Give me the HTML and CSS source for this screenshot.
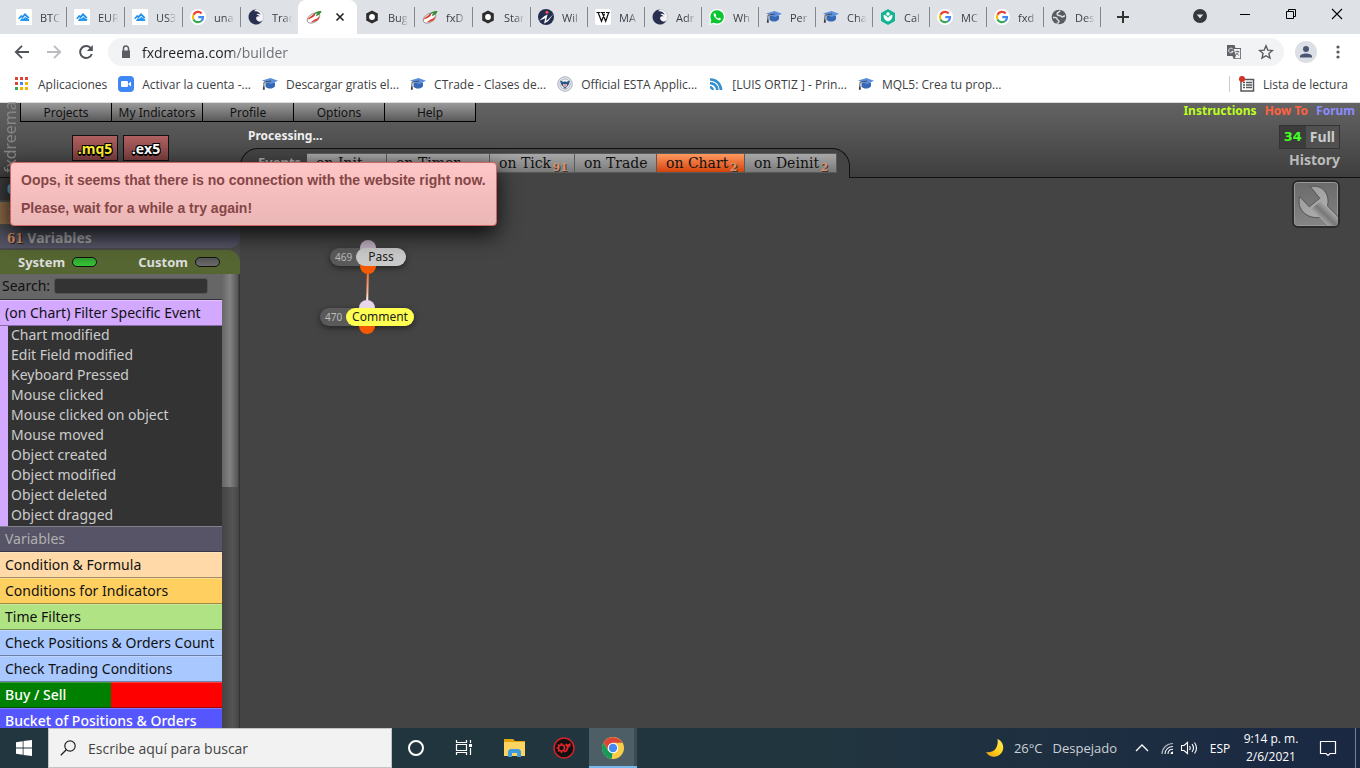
FILE: index.html
```html
<!DOCTYPE html>
<html lang="es">
<head>
<meta charset="utf-8">
<title>fxDreema builder</title>
<link rel="stylesheet" href="styles.css">
</head>
<body>
<svg class="defs" aria-hidden="true">
  <symbol id="cloud" viewBox="0 0 16 16"><rect width="16" height="16" rx="1" fill="#fff"/><path d="M2 9.500L5 6l1.500.8L9 4l4.500 4.500-1.500 1-3-2.700-2.200 2.400-1.700-.9L3.600 10z" fill="#1e8fee"/><path d="M4 11.500L5.800 9l1.500.8L9.200 8l4.300 2.500-.7 1.500H4.500z" fill="#2196f3"/></symbol>
  <symbol id="google" viewBox="0 0 16 16"><circle cx="8" cy="8" r="8" fill="#fff"/><path d="M11.700 4.400A5.100 5.100 0 0 0 3.500 5.700" fill="none" stroke="#ea4335" stroke-width="2.200"/><path d="M3.500 5.700a5.100 5.100 0 0 0 0 4.700" fill="none" stroke="#fbbc05" stroke-width="2.200"/><path d="M3.500 10.400a5.100 5.100 0 0 0 7.800 1.600" fill="none" stroke="#34a853" stroke-width="2.200"/><path d="M11.300 12A5 5 0 0 0 13 8.200H8.300" fill="none" stroke="#4285f4" stroke-width="2.200"/></symbol>
  <symbol id="eagle" viewBox="0 0 16 16"><circle cx="8" cy="8" r="7.500" fill="#f4f4f7" stroke="#b9bcc8" stroke-width=".6"/><path d="M8 .6c-1 .6-1.400 1-1.600 1.700 2.500-.6 5.500.7 6.300 3.700-1.300-1.200-3-1.500-4.200-.8 1 .7 2.600.9 3 2.500-1-.6-2-.6-2.800.1C7.600 9 8 11.500 11 12.600c1.500.3 2.500-.3 3.400-1.400-1 2.500-3.200 4.200-6.400 4.200C3.800 15.400.6 12 .6 8S4 .6 8 .6z" fill="#292f50"/></symbol>
  <symbol id="fx" viewBox="0 0 16 16"><ellipse cx="7.500" cy="9" rx="7" ry="4.200" transform="rotate(-32 7.500 9)" fill="#fff" stroke="#777" stroke-width=".7"/><path d="M1.500 10.500C3 8 6 7 8.500 4c1.500 1.500.3 3.200-2.100 4.500C4.500 9.700 3 10.300 1.500 10.500zM4.500 13.200c2-.7 3-2.700 6-3.400 1.400-.3 1.500-1.500 1.800-2.500 1.600 2.200-.2 4.200-3 5-1.700.6-3 1.100-4.800.9z" fill="#e53a2c"/><path d="M7.500 6C9 3 12 1.500 15.500 2c-.5 2.800-3 4.500-5.500 5 0-1 1-2.300 1.700-2.900C10 4.500 9 5 7.500 6z" fill="#398b38"/></symbol>
  <symbol id="hex" viewBox="0 0 16 16"><path d="M8 1.500l5.800 3v7L8 14.500l-5.800-3v-7z" fill="#2d2d2d"/><circle cx="8" cy="8" r="2.900" fill="#fff"/></symbol>
  <symbol id="wilson" viewBox="0 0 16 16"><circle cx="8" cy="8" r="8" fill="#252d4f"/><circle cx="9" cy="3.200" r="1.500" fill="#ef5350"/><path d="M1 11.800L6.500 7l3-1.400-1.500 6.200 2-1.200L15.500 5l-5.400 7.300-4.100 2.200 1.300-5.200z" fill="#fff"/></symbol>
  <symbol id="wiki" viewBox="0 0 16 16"><rect width="16" height="16" rx="2" fill="#fff"/><path d="M1.500 3.500h4M6 3.500h4M11 3.500h3.700M3.200 3.700l3.300 8.600 3-7.500M7.200 3.700l3.500 8.600 2.900-8.500" fill="none" stroke="#111" stroke-width="1.200"/></symbol>
  <symbol id="whats" viewBox="0 0 16 16"><path d="M0 16l1-4.500A8 8 0 1 1 4.500 15z" fill="#fff"/><path d="M1.500 14.500l.8-3.300A6.700 6.700 0 1 1 5 13.800z" fill="#0ac630"/><path d="M5.400 4.300c-1.500.8-.6 3 1.300 4.900 2 1.900 4.200 2.600 4.900 1.200.5-1-.2-1.300-1.100-1.600-.8-.3-.9.900-1.500.7-1-.3-2-1.300-2.300-2.200-.1-.5.700-.7.400-1.400-.4-.8-.7-2-1.700-1.600z" fill="#fff"/></symbol>
  <symbol id="cap" viewBox="0 0 16 16"><path d="M3.500 6.500v4.300c2 2.500 7.500 2.500 9.500-.5V6.500z" fill="#3768b5"/><path d="M0 4.500L8.500 2 16 4.800 9 8z" fill="#5c8fdc"/><path d="M9 5L2 6.200 1.800 11" fill="none" stroke="#444" stroke-width=".9"/><path d="M1.200 10.500h1.400l.2 3.300H.8z" fill="#3c3a38"/></symbol>
  <symbol id="care" viewBox="0 0 16 16"><path d="M8 0l7 4v8l-7 4-7-4V4z" fill="#14b393"/><path d="M3.500 6c2.500 0 4 1.500 4.500 3 .5-1.500 2-3 4.500-3 0 3.500-1.500 5.500-4.500 6.500-3-1-4.500-3-4.500-6.500z" fill="#fff"/><circle cx="8" cy="5" r="1.800" fill="#fff"/></symbol>
  <symbol id="globe" viewBox="0 0 16 16"><circle cx="8" cy="8" r="7.300" fill="#575c61"/><path d="M2 8.500c2 0 4-.5 4 1.300s2 .8 2 2.500-1.500 2-2.500 1.800M9 1.500c0 2-3 1.500-3 3.500s3 1 4.500 2.500 1.200-.8 3.500-.5" fill="none" stroke="#dee1e6" stroke-width="1.400"/></symbol>
  <symbol id="zoomcam" viewBox="0 0 16 16"><rect width="16" height="16" rx="4" fill="#3f87f5"/><rect x="3" y="5" width="7" height="6" rx="1.300" fill="#fff"/><path d="M10.500 7.500L13 5.700v4.700l-2.500-1.800z" fill="#fff"/></symbol>
  <symbol id="seal" viewBox="0 0 16 16"><circle cx="8" cy="8" r="7.300" fill="#e3e5e9" stroke="#aeb2bb"/><circle cx="8" cy="8" r="5" fill="#f4f6f8" stroke="#8792a3" stroke-width=".6"/><path d="M3 4.500L7 6l1-1 1 1 4-1.500-1.500 4.500L8 13 4.500 9z" fill="#2b5685"/><path d="M6 8h4v2L8 11.500 6 10z" fill="#ddd"/><path d="M7 8v2.500M8 8v3M9 8v2.500" stroke="#c44" stroke-width=".5"/></symbol>
  <symbol id="rss" viewBox="0 0 16 16"><path d="M2 3.500A10.500 10.500 0 0 1 13 14M2 7.200A7 7 0 0 1 9.300 14" fill="none" stroke="#3690cb" stroke-width="2.600"/><path d="M2 10c2 0 4 1.800 4 4H4l-2-1.700z" fill="#3690cb"/></symbol>
</svg>

<nav class="tabstrip" aria-label="Pestañas">
  <button class="tab"><svg><use href="#cloud"/></svg><span>BTC</span></button>
  <button class="tab"><svg><use href="#cloud"/></svg><span>EUR</span></button>
  <button class="tab"><svg><use href="#cloud"/></svg><span>US3</span></button>
  <button class="tab"><svg><use href="#google"/></svg><span>una</span></button>
  <button class="tab before-active"><svg><use href="#eagle"/></svg><span>Trac</span></button>
  <button class="tab active" aria-label="fxDreema"><svg><use href="#fx"/></svg><svg class="close" viewBox="0 0 16 16"><path d="M4.500 4.500l7 7m0-7l-7 7" stroke="#222" stroke-width="1.600"/></svg></button>
  <button class="tab"><svg><use href="#hex"/></svg><span>Bug</span></button>
  <button class="tab"><svg><use href="#fx"/></svg><span>fxD</span></button>
  <button class="tab"><svg><use href="#hex"/></svg><span>Star</span></button>
  <button class="tab narrow"><svg><use href="#wilson"/></svg><span>Wil</span></button>
  <button class="tab narrow"><svg><use href="#wiki"/></svg><span>MA</span></button>
  <button class="tab narrow"><svg><use href="#eagle"/></svg><span>Adr</span></button>
  <button class="tab narrow"><svg><use href="#whats"/></svg><span>Wh</span></button>
  <button class="tab narrow"><svg><use href="#cap"/></svg><span>Per</span></button>
  <button class="tab narrow"><svg><use href="#cap"/></svg><span>Cha</span></button>
  <button class="tab narrow"><svg><use href="#care"/></svg><span>Cal</span></button>
  <button class="tab narrow"><svg><use href="#google"/></svg><span>MC</span></button>
  <button class="tab narrow"><svg><use href="#google"/></svg><span>fxd</span></button>
  <button class="tab narrow"><svg><use href="#globe"/></svg><span>Des</span></button>
  <button class="newtab" aria-label="Nueva pestaña"><svg viewBox="0 0 16 16"><path d="M8 2v12M2 8h12" stroke="#333" stroke-width="2"/></svg></button>
  <div class="winctl">
    <button aria-label="Buscar pestañas"><svg viewBox="0 0 16 16"><circle cx="9" cy="9" r="7" fill="#35383c"/><path d="M5.800 7.500h6.400L9 11.500z" fill="#dee1e6"/></svg></button>
    <button aria-label="Minimizar"><svg viewBox="0 0 16 16"><path d="M3 7.500h10" stroke="#000"/></svg></button>
    <button aria-label="Restaurar"><svg viewBox="0 0 16 16"><path d="M3.500 4.500h7v7h-7zM5.500 4.500v-2h7v7h-2" fill="none" stroke="#000"/></svg></button>
    <button aria-label="Cerrar"><svg viewBox="0 0 16 16"><path d="M3 2l10 10M13 2L3 12" stroke="#000" stroke-width="1.100"/></svg></button>
  </div>
</nav>

<div class="toolbar">
  <button aria-label="Atrás"><svg viewBox="0 0 16 16"><path d="M15 8H2M8 1.800L1.800 8 8 14.200" fill="none" stroke="#505357" stroke-width="1.800"/></svg></button>
  <button aria-label="Adelante"><svg viewBox="0 0 16 16"><path d="M1 8h13M8 1.800L14.200 8 8 14.200" fill="none" stroke="#b9bbbe" stroke-width="1.800"/></svg></button>
  <button aria-label="Recargar"><svg viewBox="0 0 16 16"><path d="M13 4.500A6 6 0 1 0 13.800 10" fill="none" stroke="#505357" stroke-width="2"/><path d="M14.800 1v6H8.800z" fill="#505357"/></svg></button>
  <div class="omnibox">
    <svg viewBox="0 0 16 16"><path d="M4 6.500h8v7.500H4z" fill="#5a5d61"/><path d="M5.500 7V4.500a2.500 2.500 0 0 1 5 0V7" fill="none" stroke="#5a5d61" stroke-width="1.500"/></svg>
    <input class="url" type="text" value="fxdreema.com/builder" aria-label="Dirección">
    <button aria-label="Traducir"><svg viewBox="0 0 16 16"><path d="M1 1h7.500l1 3H15v11H7.500l-1-3H1z" fill="#5f6368"/><path d="M8 5h6.200v9.200H8.500L10 12 8 6z" fill="#f1f3f4"/><path d="M7 5.300A2.300 2.300 0 1 0 7.200 7.300H5.300" fill="none" stroke="#f1f3f4"/><path d="M9.300 7.500h4M11.300 6.500v1M9.700 11c1.500-.8 2.500-2 2.800-3.500M10 8.800l3 2.800" fill="none" stroke="#5f6368" stroke-width=".8"/></svg></button>
    <button aria-label="Favorito"><svg viewBox="0 0 16 16"><path d="M8 1.800l1.800 4.300 4.700.4-3.600 3 1.100 4.600L8 11.700l-4 2.400 1.100-4.600-3.600-3 4.700-.4z" fill="none" stroke="#55585c" stroke-width="1.300"/></svg></button>
  </div>
  <button class="avatar" aria-label="Perfil"><svg viewBox="0 0 22 22"><circle cx="11" cy="11" r="11" fill="#dcdfe5"/><circle cx="11" cy="8" r="3" fill="#4b5670"/><path d="M5 16.500v-1c0-4 12-4 12 0v1z" fill="#4b5670"/></svg></button>
  <button class="dots" aria-label="Menú"><svg viewBox="0 0 16 16"><g fill="#55585c"><circle cx="8" cy="3" r="1.600"/><circle cx="8" cy="8" r="1.600"/><circle cx="8" cy="13" r="1.600"/></g></svg></button>
</div>

<nav class="bookmarks" aria-label="Marcadores">
  <a href="#"><svg viewBox="0 0 16 16"><g fill="#dc4437"><path d="M1 1h3v3H1zM6 1h3v3H6zM11 1h3v3h-3zM1 6h3v3H1z"/></g><path d="M6 6h3v3H6z" fill="#4285f4"/><path d="M11 6h3v3h-3zM6 11h3v3H6zM11 11h3v3h-3z" fill="#f4b400"/><path d="M1 11h3v3H1z" fill="#34a853"/></svg>Aplicaciones</a>
  <a href="#"><svg><use href="#zoomcam"/></svg>Activar la cuenta -...</a>
  <a href="#"><svg><use href="#cap"/></svg>Descargar gratis el...</a>
  <a href="#"><svg><use href="#cap"/></svg>CTrade - Clases de...</a>
  <a href="#"><svg><use href="#seal"/></svg>Official ESTA Applic...</a>
  <a href="#"><svg><use href="#rss"/></svg>[LUIS ORTIZ ] - Prin...</a>
  <a href="#"><svg><use href="#cap"/></svg>MQL5: Crea tu prop...</a>
  <button class="reading"><svg viewBox="0 0 16 16"><path d="M2 3.500h12.500V15H2z" fill="none" stroke="#55585c" stroke-width="1.500"/><path d="M4 6.500h2M7 6.500h6M4 9h2M7 9h6M4 11.500h2M7 11.500h6" stroke="#55585c" stroke-width="1.300"/><circle cx="3" cy="3" r="3" fill="#d93025"/></svg>Lista de lectura</button>
</nav>

<main class="app">
  <header class="header">
    <div class="brand">fxdreema</div>
    <div class="left">
      <nav class="menu">
        <button>Projects</button><button>My Indicators</button><button>Profile</button><button>Options</button><button>Help</button>
      </nav>
      <div class="below">
        <div class="exports"><button class="mq">.mq5</button><button class="ex">.ex5</button></div>
        <div class="status">
          <p>Processing...</p>
          <div class="events">
            <b>Events</b>
            <div class="evtabs">
              <button class="e-init">on Init</button><button class="e-timer">on Timer</button><button class="e-tick">on Tick <sub>91</sub></button><button class="e-trade">on Trade</button><button class="e-chart">on Chart <sub>2</sub></button><button class="e-deinit">on Deinit <sub>2</sub></button>
            </div>
          </div>
        </div>
      </div>
    </div>
    <div class="right">
      <nav class="help"><a class="ins" href="#">Instructions</a><a class="how" href="#">How To</a><a class="forum" href="#">Forum</a></nav>
      <div class="full"><span>34</span><b>Full</b></div>
      <a class="history" href="#">History</a>
    </div>
  </header>

  <div class="work">
    <aside class="side">
      <button class="row consts" aria-label="Constants"><i>0</i></button>
      <button class="row inputs" aria-label="Inputs"><i>1</i></button>
      <button class="row vars"><i>61</i> Variables</button>
      <div class="modes"><button>System<span class="led on"></span></button><button>Custom<span class="led"></span></button></div>
      <div class="scroll">
        <div class="list">
          <div class="search"><label for="q">Search:</label><input id="q" type="text"></div>
          <button class="cat filter">(on Chart) Filter Specific Event</button>
          <ul>
            <li>Chart modified</li><li>Edit Field modified</li><li>Keyboard Pressed</li><li>Mouse clicked</li><li>Mouse clicked on object</li><li>Mouse moved</li><li>Object created</li><li>Object modified</li><li>Object deleted</li><li>Object dragged</li>
          </ul>
          <button class="cat c-vars">Variables</button>
          <button class="cat c-cond">Condition &amp; Formula</button>
          <button class="cat c-ind">Conditions for Indicators</button>
          <button class="cat c-time">Time Filters</button>
          <button class="cat c-check">Check Positions &amp; Orders Count</button>
          <button class="cat c-check">Check Trading Conditions</button>
          <button class="cat c-buy">Buy / Sell</button>
          <button class="cat c-bucket">Bucket of Positions &amp; Orders</button>
        </div>
        <div class="track"><div class="thumb"></div></div>
      </div>
    </aside>
    <section class="canvas">
      <svg class="wire" viewBox="0 0 10 44"><defs><linearGradient id="w" x1="0" y1="0" x2="0" y2="1"><stop offset="0" stop-color="#f50"/><stop offset=".6" stop-color="#f5b9a0"/><stop offset=".8" stop-color="#fff"/></linearGradient></defs><path d="M5 0h2L6 44H4z" fill="url(#w)"/></svg>
      <div class="node pass"><i class="in"></i><i class="out"></i><span>469</span><b>Pass</b></div>
      <div class="node comment"><i class="in"></i><i class="out"></i><span>470</span><b>Comment</b></div>
      <button class="tools" aria-label="Herramientas"><svg viewBox="0 0 46 46"><defs><linearGradient id="s" x1="0" y1="0" x2="1" y2="1"><stop offset="0" stop-color="#999"/><stop offset=".55" stop-color="#aaa"/><stop offset="1" stop-color="#999"/></linearGradient><linearGradient id="h" x1="0" y1="1" x2="1" y2="0"><stop offset=".25" stop-color="#bbb"/><stop offset=".5" stop-color="#777"/><stop offset=".75" stop-color="#b5b5b5"/></linearGradient></defs><path d="M17 5C29 2 38 12 35 25l11 11v11H36l-9-10C14 39 2 29 6 15l10 11 11-9z" fill="url(#s)" stroke="#505050"/><path d="M18 28l10-8 18 17v10H36z" fill="url(#h)"/></svg></button>
    </section>
  </div>

  <div class="alert" role="alert"><p>Oops, it seems that there is no connection with the website right now.</p><p>Please, wait for a while a try again!</p></div>
</main>

<footer class="taskbar">
  <button class="start" aria-label="Inicio"><svg viewBox="0 0 16 16"><path d="M0 2.200l6.700-1v6.400H0zM7.500 1.100L16 0v7.600H7.500zM0 8.400h6.700v6.400l-6.700-1zM7.500 8.400H16V16l-8.500-1.100z" fill="#fff"/></svg></button>
  <div class="tsearch"><svg viewBox="0 0 16 16"><circle cx="10" cy="6" r="5.200" fill="none" stroke="#222" stroke-width="1.200"/><path d="M6.300 9.700L.8 15.300" stroke="#222" stroke-width="1.300"/></svg><input type="text" placeholder="Escribe aquí para buscar" aria-label="Buscar"></div>
  <button class="task" aria-label="Cortana"><svg viewBox="0 0 24 24"><circle cx="12" cy="12" r="7" fill="none" stroke="#fff" stroke-width="2"/></svg></button>
  <button class="task" aria-label="Vista de tareas"><svg viewBox="0 0 24 24"><path d="M4.500 4v2.500h10V4M4.500 19v-2.500h10V19M4.500 8.500h10v6h-10zM18.500 4v3M18.500 12v7" fill="none" stroke="#fff" stroke-width="1.200"/><path d="M17 8h3v3h-3z" fill="#fff"/></svg></button>
  <button class="task folder" aria-label="Explorador"><svg viewBox="0 0 24 24"><path d="M1 3h9l2 2h10v3H1z" fill="#e2a30c"/><path d="M1 6h21v14H1z" fill="#fcd462"/><path d="M5 21v-6l2-2h9l2 2v6h-4v-4H9v4z" fill="#3e9bdd"/></svg></button>
  <button class="task red" aria-label="Aplicación"><svg viewBox="0 0 24 24"><circle cx="12" cy="12" r="10" fill="#111" stroke="#d3222a" stroke-width="1.500"/><circle cx="9.500" cy="12" r="3" fill="none" stroke="#e4252c" stroke-width="1.600"/><path d="M9.500 7v2M9.500 15v2M4.500 12h2M6 8.500l1.500 1.500M6 15.500L7.500 14M12.500 9l-1 1M12 15l1 1" stroke="#e4252c" stroke-width="1.600"/><path d="M13 8.500l1.500-1 1 1L18.500 7v4l-1.200-.7L15 15.500l-2.500.8 2.500-5z" fill="#e4252c"/></svg></button>
  <button class="task chrome" aria-label="Chrome"><svg viewBox="0 0 24 24"><circle cx="12" cy="12" r="11" fill="#f9ce46"/><path d="M2.500 6.500A11 11 0 0 1 21.500 6.700H12L7.500 14.500z" fill="#db4437"/><path d="M2.400 6.600L7.300 14.800l4.200 2.300-.4 5.900A11 11 0 0 1 2.400 6.600z" fill="#169a5c"/><path d="M12 17.300l-1.500 5.600h1.900L17 14z" fill="#f9ce46"/><circle cx="12" cy="12" r="5.300" fill="#fff"/><circle cx="12" cy="12" r="4.200" fill="#4587f3"/></svg></button>
  <div class="tray">
    <button class="weather"><svg viewBox="0 0 18 18"><defs><linearGradient id="m" x1="1" y1="0" x2="0" y2="1"><stop stop-color="#ffec5c"/><stop offset=".5" stop-color="#ffd21f"/><stop offset="1" stop-color="#ee9a12"/></linearGradient></defs><path d="M11.500 0A9.200 9.200 0 1 1 0 13c7 1.500 13-4 11.500-13z" fill="url(#m)"/></svg><span>26°C</span><span>Despejado</span></button>
    <button class="chev" aria-label="Mostrar iconos"><svg viewBox="0 0 16 16"><path d="M2 11l6-6 6 6" fill="none" stroke="#fff" stroke-width="1.300"/></svg></button>
    <button class="wifi" aria-label="Red"><svg viewBox="0 0 16 16"><g fill="none" stroke="#eee" stroke-width="1.100"><path d="M3 14C3 8 8 3.500 14 3.500" opacity=".7"/><path d="M6 14c0-4.500 3.500-7.500 8-7.500M9 14c0-3 2-4.800 5-4.800"/></g><path d="M11.500 14a2.500 2.500 0 0 1 2.500-2.500V14z" fill="#fff"/></svg></button>
    <button class="vol" aria-label="Volumen"><svg viewBox="0 0 18 16"><path d="M1.500 5.500H4l3.500-3v11L4 10.500H1.500zM9.500 6q1.500 2 0 4M12 4.200q3 3.800 0 7.600M14.500 2.500q4 5.500 0 11" fill="none" stroke="#fff" stroke-width="1.100"/></svg></button>
    <button class="lang">ESP</button>
    <button class="clock"><time>9:14 p. m.<br>2/6/2021</time></button>
    <button class="notif" aria-label="Notificaciones"><svg viewBox="0 0 18 18"><path d="M1.500 2.500h15v12H11l-2 2-2-2H1.500z" fill="none" stroke="#fff" stroke-width="1.200"/></svg></button>
  </div>
</footer>
</body>
</html>
```
FILE: styles.css
```css
* { box-sizing: border-box; }
body { margin: 0; height: 100vh; display: flex; flex-direction: column; overflow: hidden; font: 12px "Open Sans", "Noto Sans", sans-serif; color: #3c4043; background: #fff; }
button { border: 0; padding: 0; margin: 0; background: none; font: inherit; color: inherit; text-align: left; }
input { border: 0; padding: 0; margin: 0; background: none; font: inherit; outline: 0; min-width: 0; }
a { color: inherit; text-decoration: none; }
p, ul { margin: 0; padding: 0; }
svg { width: 16px; height: 16px; flex: none; display: block; }
.defs { display: none; }

/* Browser tabs */
.tabstrip { display: flex; height: 34px; flex: none; padding-left: 8px; background: #dee1e6; }
.tab { display: flex; align-items: center; width: 58px; flex: none; padding: 0 2px 0 8px; gap: 8px; position: relative; font-size: 11px; }
.tab.narrow { width: 57px; }
.tab span { flex: 1; white-space: nowrap; mask-image: linear-gradient(to right, #000 45%, transparent 85%); }
.tab::after { content: ""; position: absolute; right: -1px; top: 7px; width: 1px; height: 20px; background: #84878b; }
.tab.active { background: #fff; border-radius: 8px 8px 0 0; width: 59px; margin-right: -1px; gap: 10px; }
.tab.active::after, .tab.before-active::after { display: none; }
.newtab { margin-left: 15px; display: flex; align-items: center; }
.winctl { margin-left: auto; display: flex; }
.winctl button { width: 46px; display: flex; justify-content: center; padding-top: 7px; }

/* Address bar */
.toolbar { display: flex; align-items: center; height: 36px; flex: none; padding: 0 14px; gap: 16px; }
.toolbar button { flex: none; }
.omnibox { flex: 1; display: flex; align-items: center; gap: 16px; height: 28px; margin-left: -2px; padding: 0 10px; border-radius: 14px; background: #f1f3f4; }
.url { flex: 1; margin-left: -8px; font-size: 14px; color: transparent; background: linear-gradient(to right, #202124 91px, #6a6e73 91px); background-clip: text; -webkit-background-clip: text; }
.toolbar .avatar { margin: 0 -3px 0 -5px; }
.avatar svg { width: 22px; height: 22px; }

/* Bookmarks */
.bookmarks { display: flex; align-items: center; height: 33px; flex: none; padding: 0 12px 4px 14px; gap: 11px; border-bottom: 1px solid #dadce0; white-space: nowrap; }
.bookmarks a, .reading { display: flex; align-items: center; gap: 8px; }
.reading { margin-left: auto; padding-left: 9px; height: 16px; border-left: 1px solid #c8cacd; }

/* Builder */
.app { flex: 1; min-height: 0; display: flex; flex-direction: column; position: relative; background: #444; font-family: "Noto Sans", sans-serif; }
.header { display: flex; flex: none; height: 75px; background: linear-gradient(#636363, #3e3e3e); border-bottom: 1px solid #111; }
.brand { width: 20px; padding-top: 4px; writing-mode: vertical-rl; transform: rotate(180deg); font-size: 16px; line-height: 20px; color: #858585; white-space: nowrap; }
.left { flex: 1; display: flex; flex-direction: column; }
.menu { display: flex; border-left: 1px solid #000; align-self: flex-start; }
.menu button { width: 91px; height: 19px; text-align: center; color: #111; background: linear-gradient(#9a9a9a, #5a5a5a); border-right: 1px solid #000; border-bottom: 1px solid #000; }
.below { flex: 1; display: flex; }
.exports { width: 220px; padding: 13px 0 0 52px; display: flex; gap: 5px; }
.exports button { width: 46px; height: 26px; border: 1px solid #111; background: linear-gradient(#b06060, #7c4040); text-align: center; font: bold 14px "Open Sans", sans-serif; color: #fff; text-shadow: 1px 1px #000, -1px -1px #000, 1px -1px #000, -1px 1px #000, 0 2px #000; }
.exports .mq { color: #fe3; }
.status { display: flex; flex-direction: column; justify-content: space-between; }
.status p { padding: 6px 8px 0; line-height: 16px; font-weight: bold; color: #eee; }
.events { display: flex; height: 30px; margin-bottom: -1px; padding: 4px 12px 0 17px; border: 1px solid #111; border-bottom: 0; border-radius: 18px 18px 0 0; background: #444; }
.events > b { width: 49px; font-size: 13px; line-height: 18px; color: #aaa; }
.evtabs { display: flex; }
.evtabs button { height: 20px; padding-left: 9px; border: 1px solid #5a5a5a; border-left: 0; background: linear-gradient(#a8a8a8, #7a7a7a); color: #111; font: 14px/18px "DejaVu Serif", serif; white-space: nowrap; }
.evtabs sub { font: bold 11px/11px "DejaVu Serif", serif; color: #d9926a; vertical-align: -3px; margin-left: -3px; text-shadow: 1px 1px #333; }
.evtabs .e-init { width: 80px; } .evtabs .e-timer { width: 103px; } .evtabs .e-tick { width: 85px; } .evtabs .e-trade { width: 82px; } .evtabs .e-chart { width: 88px; } .evtabs .e-deinit { width: 92px; }
.evtabs .e-chart { background: linear-gradient(#ff9a60, #d4420c); }
.right { display: flex; flex-direction: column; align-items: flex-end; padding-right: 5px; }
.help { display: flex; gap: 8px; font-weight: bold; line-height: 16px; }
.ins { color: #beff1e; } .how { color: #ff6240; } .forum { color: #8c8cff; }
.full { display: flex; margin: 6px 15px 0 0; height: 24px; border: 1px solid #333; background: #505050; line-height: 22px; color: #ccc; font-size: 14px; }
.full span { padding: 0 4px; background: #3c3c3c; color: #4f2; font: bold 13px/22px "DejaVu Sans", sans-serif; }
.full b { padding: 0 4px; }
.history { margin: 1px 15px 0 0; font-size: 14px; line-height: 20px; font-weight: bold; color: #bbb; }

.work { flex: 1; min-height: 0; display: flex; }
.side { width: 240px; flex: none; display: flex; flex-direction: column; background: #4a4a4a; }
.row { flex: none; height: 22px; margin-bottom: 2px; padding-left: 7px; font-size: 14px; line-height: 20px; font-weight: bold; color: #a5a5a5; }
.row.vars { height: 21px; margin: 1px 0 2px; border-radius: 0 11px 11px 0; background: linear-gradient(#484856, #565668); }
.row i { font: bold 12px "DejaVu Serif", serif; color: #d9926a; text-shadow: 1px 1px #222; }
.consts { background: #3a3a3a; } .consts i { color: #5ab0cc; } .inputs { background: #8c6a48; }
.modes { flex: none; display: flex; justify-content: space-between; height: 24px; padding: 0 20px 0 18px; border-radius: 0 12px 0 0; background: #556632; color: #ddd; font-size: 13px; font-weight: bold; }
.modes button { display: flex; align-items: center; gap: 7px; font-weight: bold; }
.led { width: 25px; height: 10px; border: 1px solid #111; border-radius: 5px; background: linear-gradient(#555, #6a6a6a); }
.led.on { background: linear-gradient(#2f9f2f, #35c435); }
.scroll { flex: 1; min-height: 0; display: flex; overflow: hidden; }
.list { flex: 1; min-width: 0; display: flex; flex-direction: column; font-size: 14px; }
.search { flex: none; display: flex; align-items: center; height: 26px; padding: 0 14px 2px 2px; gap: 4px; background: #666; color: #111; border-bottom: 1px solid #333; }
.search input { flex: 1; height: 16px; border: 1px solid #555; border-radius: 3px; background: #333; color: #ddd; }
.cat { flex: none; height: 26px; padding-left: 5px; line-height: 22px; color: #111; border-top: 1px solid rgba(255,255,255,.25); border-bottom: 1px solid rgba(0,0,0,.35); white-space: nowrap; }
.list ul { list-style: none; border-left: 8px solid #d3a9ff; background: #333; color: #ccc; }
.list li { padding-left: 3px; height: 20px; line-height: 18px; }
.filter { background: #d3a9ff; } .c-vars { background: #565466; color: #b0b0b0; } .c-cond { background: #ffdaa8; } .c-ind { background: #ffd060; } .c-time { background: #b0e383; } .c-check { background: #a8c8ff; }
.c-buy { color: #fff; font-weight: 500; background: linear-gradient(to right, #008000 50%, #f00 50%); }
.c-bucket { color: #fff; font-weight: 500; background: #5656ff; }
.track { flex: none; width: 18px; background: linear-gradient(to right, #444, #555 60%, #444 95%, #333 95%); }
.thumb { height: 213px; width: 16px; background: linear-gradient(to right, #666, #828282 50%, #555); }

.canvas { flex: 1; position: relative; background: #444; }
.node { position: absolute; display: flex; height: 18px; border-radius: 9px; background: #5a5a5a; box-shadow: 0 2px 6px rgba(0,0,0,.5); font-size: 12px; line-height: 18px; }
.node span { width: 26px; padding-left: 5px; font-size: 10px; color: #bbb; position: relative; }
.node b { flex: 1; position: relative; border-radius: 9px; text-align: center; font-weight: normal; color: #222; }
.node i { position: absolute; width: 16px; height: 16px; border-radius: 8px; background: #e8d6ea; }
.node .in { top: -8px; } .node .out { bottom: -8px; background: #f55a00; }
.pass { left: 90px; top: 70px; width: 76px; } .pass b { background: #c9c9c9; } .pass i { left: 30px; } .pass .in { background: #c0b2c2; }
.comment { left: 80px; top: 130px; width: 94px; } .comment b { background: #ffff52; } .comment i { left: 39px; }
.wire { position: absolute; left: 122px; top: 88px; width: 10px; height: 44px; z-index: 1; }
.pass, .comment { z-index: 2; }
.tools { position: absolute; right: 20px; top: 2px; width: 48px; height: 48px; border: 2px solid #2b2b2b; border-radius: 6px; background: linear-gradient(#6a6a6a, #858585); overflow: hidden; box-shadow: inset 0 0 0 1px #999; }
.tools svg { width: 100%; height: 100%; }
.alert { position: absolute; left: 10px; top: 59px; z-index: 3; padding: 7px 10px; border: 1px solid #c66; border-radius: 4px; background: linear-gradient(#ffc6c6, #ebb6b6); box-shadow: 0 8px 22px rgba(0,0,0,.85); color: #844646; font: bold 14px/20px "Liberation Sans", sans-serif; white-space: nowrap; }
.alert p + p { margin-top: 8px; }

/* Taskbar */
.taskbar { flex: none; height: 40px; display: flex; background: linear-gradient(to right, #22363f, #21353f 60%, #1a2843); color: #fff; }
.start { width: 48px; display: flex; align-items: center; justify-content: center; }
.tsearch { width: 344px; display: flex; align-items: center; gap: 12px; padding: 0 11px; background: #f2f2f2; border: 1px solid #c4c4c4; }
.tsearch input { flex: 1; font-size: 14px; color: #333; }
.tsearch input::placeholder { color: #444; opacity: 1; }
.task { width: 48px; display: flex; align-items: center; justify-content: center; border-bottom: 2px solid transparent; padding-top: 2px; }
.task svg { width: 24px; height: 24px; }
.task.folder { width: 54px; }
.task.red { width: 44px; margin-right: 3px; }
.task.chrome { width: 48px; background: linear-gradient(to right, #4d5e66 45px, #3c4c55 45px); border-bottom: 2px solid #76b9ed; }
.tray { margin-left: auto; display: flex; align-items: center; padding-right: 4px; }
.tray button { display: flex; align-items: center; justify-content: center; }
.tray .weather { gap: 10px; margin-right: 9px; font-size: 13px; color: #ccd2d6; }
.weather svg, .vol svg, .notif svg { width: 18px; height: 18px; }
.tray .chev { width: 32px; } .tray .wifi { width: 18px; margin-right: 4px; } .tray .vol { width: 18px; }
.tray .lang { width: 44px; }
.tray .clock { width: 58px; }
.tray .clock time { text-align: center; line-height: 18px; }
.tray .notif { width: 56px; height: 40px; border-right: 1px solid #76808c; }
```
